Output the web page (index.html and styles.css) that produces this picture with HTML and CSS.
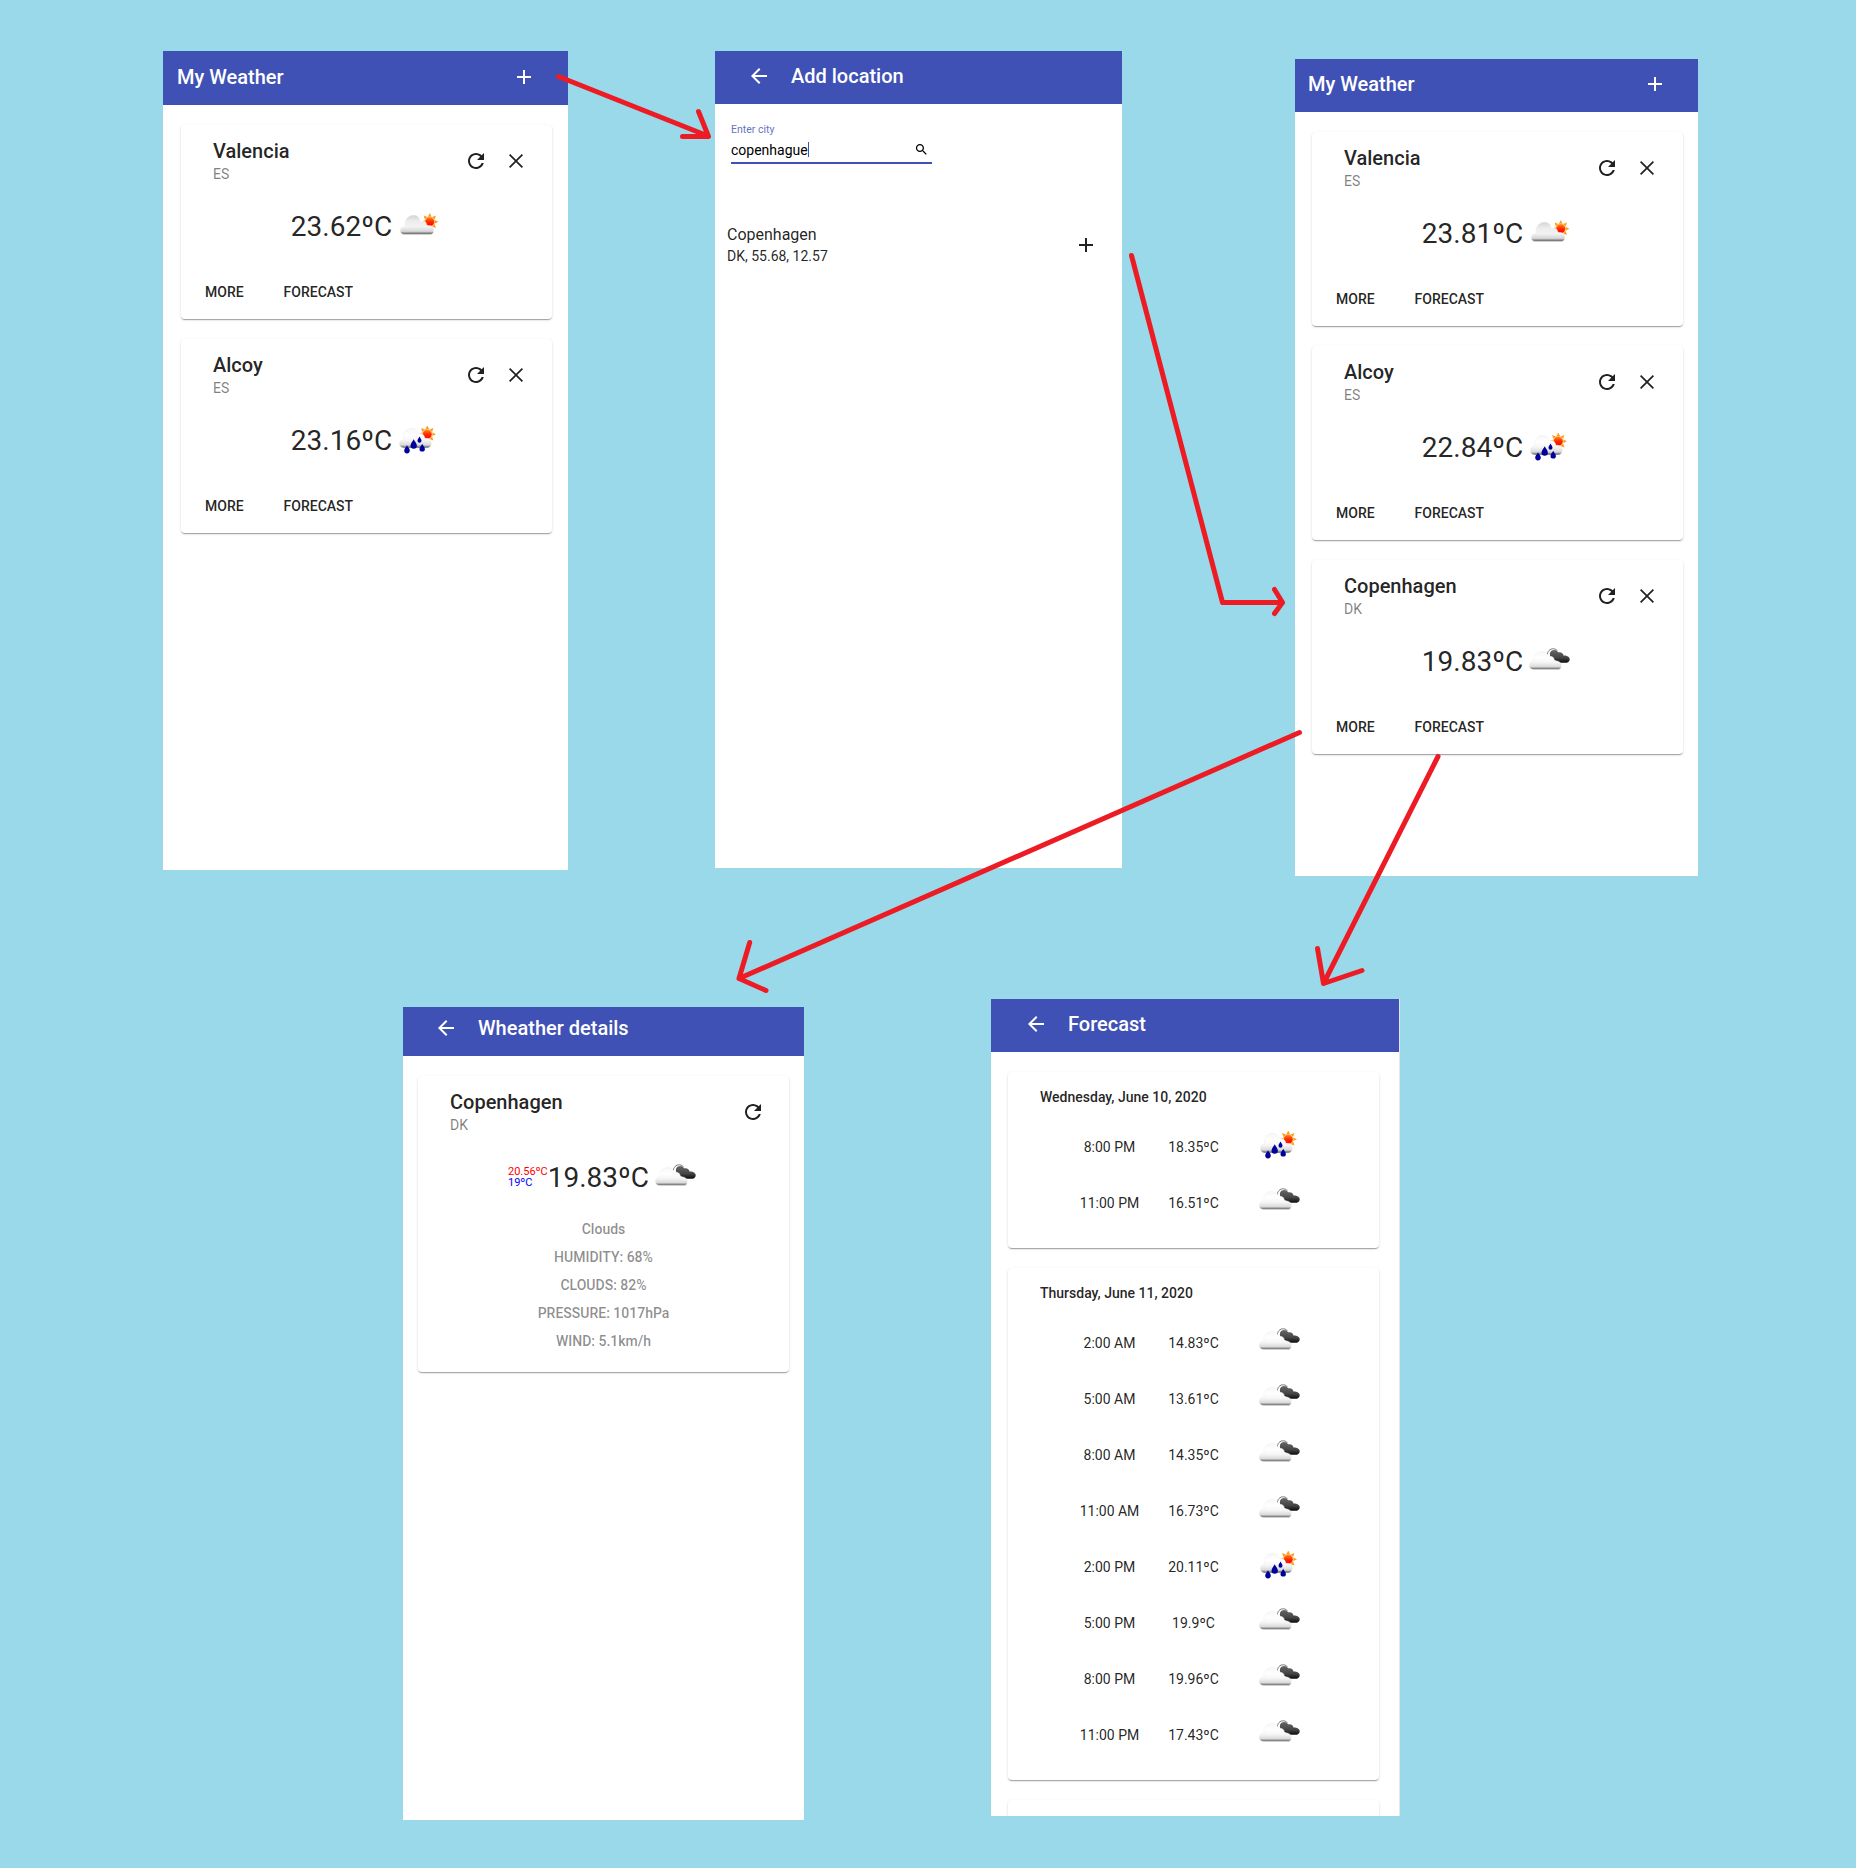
FILE: index.html
```html
<!DOCTYPE html>
<html lang="en">
<head>
<meta charset="utf-8">
<title>My Weather</title>
<link rel="stylesheet" href="styles.css">
</head>
<body>
<svg class="defs" width="0" height="0" aria-hidden="true">
  <defs>
    <linearGradient id="white-cloud" x1="0" y1="0" x2="0" y2="1">
      <stop offset="0" stop-color="#f6f6f6"/><stop offset=".35" stop-color="#fff"/><stop offset=".6" stop-color="#f6f6f6"/><stop offset=".85" stop-color="#dadada"/><stop offset=".93" stop-color="#8a8a8a"/><stop offset="1" stop-color="#777"/>
    </linearGradient>
    <linearGradient id="gray-cloud" x1="0" y1="0" x2="0" y2="1">
      <stop offset="0" stop-color="#d2d2d2"/><stop offset=".3" stop-color="#ececec"/><stop offset=".6" stop-color="#f3f3f3"/><stop offset=".84" stop-color="#d6d6d6"/><stop offset=".93" stop-color="#858585"/><stop offset="1" stop-color="#666"/>
    </linearGradient>
    <linearGradient id="dark-cloud" x1="0" y1="0" x2="0" y2="1">
      <stop offset="0" stop-color="#666"/><stop offset=".6" stop-color="#444"/><stop offset="1" stop-color="#0c0c0c"/>
    </linearGradient>
    <linearGradient id="sun-fill" x1="0" y1="0" x2="0" y2="1">
      <stop offset="0" stop-color="#ff8a1c"/><stop offset=".5" stop-color="#ff2a00"/><stop offset="1" stop-color="#f00"/>
    </linearGradient>
    <symbol id="add" viewBox="0 0 24 24"><path d="M19 13h-6v6h-2v-6H5v-2h6V5h2v6h6v2z"/></symbol>
    <symbol id="back" viewBox="0 0 24 24"><path d="M20 11H7.83l5.59-5.59L12 4l-8 8 8 8 1.41-1.41L7.83 13H20v-2z"/></symbol>
    <symbol id="refresh" viewBox="0 0 24 24"><path d="M17.65 6.35C16.2 4.9 14.21 4 12 4c-4.42 0-7.99 3.58-7.99 8s3.57 8 7.99 8c3.73 0 6.84-2.55 7.73-6h-2.08c-.82 2.33-3.04 4-5.65 4-3.31 0-6-2.69-6-6s2.69-6 6-6c1.66 0 3.14.69 4.22 1.78L13 11h7V4l-2.35 2.35z"/></symbol>
    <symbol id="close" viewBox="0 0 24 24"><path d="M19 6.2 17.8 5 12 10.8 6.2 5 5 6.2 10.8 12 5 17.8 6.2 19l5.8-5.8 5.8 5.8 1.2-1.2-5.8-5.8z"/></symbol>
    <symbol id="search" viewBox="0 0 24 24"><path d="M15.5 14h-.79l-.28-.27C15.41 12.59 16 11.11 16 9.5 16 5.91 13.09 3 9.5 3S3 5.91 3 9.5 5.91 16 9.5 16c1.61 0 3.09-.59 4.23-1.57l.27.28v.79l5 4.99L20.49 19l-4.99-5zm-6 0C7.01 14 5 11.99 5 9.5S7.01 5 9.5 5 14 7.01 14 9.5 11.99 14 9.5 14z"/></symbol>
    <symbol id="sun" viewBox="0 0 16 16">
      <g fill="#ff9c1a">
        <path id="ray" d="M8 0l1.700 3.400H6.300z"/>
        <use href="#ray" transform="rotate(45 8 8)"/><use href="#ray" transform="rotate(90 8 8)"/><use href="#ray" transform="rotate(135 8 8)"/><use href="#ray" transform="rotate(180 8 8)"/><use href="#ray" transform="rotate(270 8 8)"/><use href="#ray" transform="rotate(315 8 8)"/>
      </g>
      <circle cx="8" cy="8" r="4.300" fill="url(#sun-fill)" stroke="#ffae45" stroke-width=".5"/>
    </symbol>
    <symbol id="few-clouds" viewBox="0 0 50 50">
      <use href="#sun" x="29" y="13" width="17.500" height="17.500"/>
      <path fill="url(#gray-cloud)" stroke="#fff" stroke-width=".4" d="M12.500 34.500C6.500 34.500 6.800 26.500 12.500 26 12 19 17 14.800 21.500 15c4.500 0 6.500 3.200 7 6.200 4-1.200 6.500 1.300 6.300 4.600C37 25.200 41.800 25.400 42 30c0 3.500-2 4.500-4 4.500z"/>
    </symbol>
    <symbol id="rain" viewBox="0 0 50 50">
      <use href="#sun" x="26.500" y="11.500" width="17.500" height="17.500"/>
      <path fill="url(#white-cloud)" stroke="#e6e6e6" stroke-width=".3" d="M12.500 34C5.800 34 5.800 25.500 11.500 25.200 10.800 18 15 14 19.500 14.200c4 0 6 2.500 6.800 5.500 4-1.200 6.400 1.500 6.500 4.700 3.500-.8 6.500 1.200 6.500 4.800 0 3.200-2 4.800-4.300 4.800z"/>
      <path fill="#00009c" d="M21.700 25.200c.8 2.200 3.200 4 3.200 6.400a3.200 3.200 0 0 1-6.400 0c0-2.400 2.400-4.200 3.200-6.400zM15 31.300c.6 1.600 2.800 3.200 2.800 5.300a2.800 2.800 0 0 1-5.600 0c0-2.100 2.200-3.700 2.800-5.300zM30.200 29.700c.6 1.600 2.700 3.200 2.700 5.200a2.700 2.700 0 0 1-5.400 0c0-2 2.100-3.600 2.700-5.200zM27.500 22.600c.5 1.300 2 2.500 2 4.200a2 2 0 0 1-4 0c0-1.700 1.500-2.900 2-4.200z"/>
    </symbol>
    <symbol id="clouds" viewBox="0 0 50 50">
      <path fill="none" stroke="#777" stroke-width="1" d="M24 20.500c.5-4.200 3-7 6.500-6.700 2 .2 3.200 1 4 2.400"/>
      <path fill="url(#dark-cloud)" d="M27 18c.8-3.500 6-4.200 8-.7 3-.7 5.300.8 5.500 3.200 3.500-.2 6.300 1.500 6.200 3.900-.1 2.400-2.200 3.400-4.200 3.400H37c-2.500 0-3.500-1-4-2.300C29.500 25.500 26.200 22.500 27 18z"/>
      <path fill="url(#white-cloud)" stroke="#eee" stroke-width=".4" d="M10.500 34.500C4.800 34.500 4.800 26 11 25.600 10.200 20 14 16.200 18.500 16.400c4 0 6.300 2 7 5.100 3.500-1 6 1.300 6 4.500 3.500-.6 6.800 1 6.800 4.400 0 3.200-1.800 4.100-4 4.100z"/>
    </symbol>
  </defs>
</svg>

<main class="board">
  <section class="screen screen-home">
    <div class="page">
      <header class="bar"><h1>My Weather</h1><svg class="icon"><use href="#add"/></svg></header>
      <div class="content">
        <article class="card city">
          <header class="card-head"><div><h2>Valencia</h2><p>ES</p></div><svg class="icon"><use href="#refresh"/></svg><svg class="icon"><use href="#close"/></svg></header>
          <div class="temp"><span>23.62ºC</span><svg class="weather"><use href="#few-clouds"/></svg></div>
          <footer><button>MORE</button><button>FORECAST</button></footer>
        </article>
        <article class="card city">
          <header class="card-head"><div><h2>Alcoy</h2><p>ES</p></div><svg class="icon"><use href="#refresh"/></svg><svg class="icon"><use href="#close"/></svg></header>
          <div class="temp"><span>23.16ºC</span><svg class="weather"><use href="#rain"/></svg></div>
          <footer><button>MORE</button><button>FORECAST</button></footer>
        </article>
      </div>
    </div>
  </section>

  <section class="screen screen-add">
    <div class="page">
      <header class="bar bar-back"><svg class="icon"><use href="#back"/></svg><h1>Add location</h1></header>
      <div class="search">
        <label>Enter city</label>
        <div class="field"><span>copenhague</span><i class="caret"></i><svg><use href="#search"/></svg></div>
      </div>
      <div class="result"><div><h3>Copenhagen</h3><p>DK, 55.68, 12.57</p></div><svg class="icon"><use href="#add"/></svg></div>
    </div>
  </section>

  <section class="screen screen-updated">
    <div class="page">
      <header class="bar"><h1>My Weather</h1><svg class="icon"><use href="#add"/></svg></header>
      <div class="content">
        <article class="card city">
          <header class="card-head"><div><h2>Valencia</h2><p>ES</p></div><svg class="icon"><use href="#refresh"/></svg><svg class="icon"><use href="#close"/></svg></header>
          <div class="temp"><span>23.81ºC</span><svg class="weather"><use href="#few-clouds"/></svg></div>
          <footer><button>MORE</button><button>FORECAST</button></footer>
        </article>
        <article class="card city">
          <header class="card-head"><div><h2>Alcoy</h2><p>ES</p></div><svg class="icon"><use href="#refresh"/></svg><svg class="icon"><use href="#close"/></svg></header>
          <div class="temp"><span>22.84ºC</span><svg class="weather"><use href="#rain"/></svg></div>
          <footer><button>MORE</button><button>FORECAST</button></footer>
        </article>
        <article class="card city">
          <header class="card-head"><div><h2>Copenhagen</h2><p>DK</p></div><svg class="icon"><use href="#refresh"/></svg><svg class="icon"><use href="#close"/></svg></header>
          <div class="temp"><span>19.83ºC</span><svg class="weather"><use href="#clouds"/></svg></div>
          <footer><button>MORE</button><button>FORECAST</button></footer>
        </article>
      </div>
    </div>
  </section>

  <section class="screen screen-details">
    <div class="page">
      <header class="bar bar-back"><svg class="icon"><use href="#back"/></svg><h1>Wheather details</h1></header>
      <div class="content">
        <article class="card details">
          <header class="card-head"><div><h2>Copenhagen</h2><p>DK</p></div><svg class="icon"><use href="#refresh"/></svg></header>
          <div class="temp"><div class="range"><b class="max">20.56ºC</b><b class="min">19ºC</b></div><span>19.83ºC</span><svg class="weather"><use href="#clouds"/></svg></div>
          <ul class="facts"><li>Clouds</li><li>HUMIDITY: 68%</li><li>CLOUDS: 82%</li><li>PRESSURE: 1017hPa</li><li>WIND: 5.1km/h</li></ul>
        </article>
      </div>
    </div>
  </section>

  <section class="screen screen-forecast">
    <div class="page">
      <header class="bar bar-back"><svg class="icon"><use href="#back"/></svg><h1>Forecast</h1></header>
      <div class="content">
        <article class="card day">
          <h2>Wednesday, June 10, 2020</h2>
          <div class="hours">
            <span>8:00 PM</span><span>18.35ºC</span><svg class="weather"><use href="#rain"/></svg>
            <span>11:00 PM</span><span>16.51ºC</span><svg class="weather"><use href="#clouds"/></svg>
          </div>
        </article>
        <article class="card day">
          <h2>Thursday, June 11, 2020</h2>
          <div class="hours">
            <span>2:00 AM</span><span>14.83ºC</span><svg class="weather"><use href="#clouds"/></svg>
            <span>5:00 AM</span><span>13.61ºC</span><svg class="weather"><use href="#clouds"/></svg>
            <span>8:00 AM</span><span>14.35ºC</span><svg class="weather"><use href="#clouds"/></svg>
            <span>11:00 AM</span><span>16.73ºC</span><svg class="weather"><use href="#clouds"/></svg>
            <span>2:00 PM</span><span>20.11ºC</span><svg class="weather"><use href="#rain"/></svg>
            <span>5:00 PM</span><span>19.9ºC</span><svg class="weather"><use href="#clouds"/></svg>
            <span>8:00 PM</span><span>19.96ºC</span><svg class="weather"><use href="#clouds"/></svg>
            <span>11:00 PM</span><span>17.43ºC</span><svg class="weather"><use href="#clouds"/></svg>
          </div>
        </article>
        <article class="card day"></article>
      </div>
    </div>
  </section>

  <svg class="arrows" viewBox="0 0 1856 1868">
    <path d="M558.500 76.500L708 136M698.500 111.500L708.500 136.500L682.500 136.500"/>
    <path d="M1131.500 255.500L1222.500 602.500L1282.500 602.500M1274.500 589.500L1282.500 602.500L1274.500 613.500"/>
    <path d="M1299.500 732.500L739 978.500M749.700 942.500L739 978.500L766 990.500"/>
    <path d="M1438 756.500L1323.500 983.500M1317.500 948.500L1323.500 983.500L1362 970.500"/>
  </svg>
</main>
</body>
</html>
```
FILE: styles.css
```css
* { box-sizing: border-box; margin: 0; padding: 0; }
body { background: #99d9ea; font-family: Roboto, "Liberation Sans", sans-serif; color: rgba(0, 0, 0, .87); }
.defs { position: absolute; }
.board { position: relative; width: 1856px; height: 1868px; overflow: hidden; }
.arrows { position: absolute; inset: 0; width: 1856px; height: 1868px; fill: none; stroke: #ed1c24; stroke-width: 5; stroke-linecap: round; stroke-linejoin: round; }

/* Screens are placed freely on the flow board; each one is a crop of a 411px page. */
.screen { position: absolute; overflow: hidden; background: #fff; display: flex; align-items: flex-start; }
.page { flex: none; width: 411px; }
.screen-home { left: 163px; top: 51px; width: 405px; height: 819px; }
.screen-home .page { margin: -2px 0 0 -2px; }
.screen-add { left: 715px; top: 51px; width: 407px; height: 817px; }
.screen-add .page { margin: -3px 0 0 -4px; }
.screen-updated { left: 1295px; top: 59px; width: 403px; height: 817px; }
.screen-updated .page { margin: -3px 0 0 -3px; }
.screen-details { left: 403px; top: 1007px; width: 401px; height: 813px; }
.screen-details .page { margin: -7px 0 0 -5px; }
.screen-forecast { left: 991px; top: 999px; width: 409px; height: 817px; border-right: 1px solid #e4e8ea; }
.screen-forecast .page { margin: -3px 0 0 -3px; }

.icon { width: 24px; height: 24px; fill: currentColor; flex: none; }
.weather { width: 50px; height: 50px; flex: none; }

.bar { height: 56px; background: #3f51b5; color: #fff; display: flex; align-items: center; justify-content: space-between; padding: 0 36px 0 16px; }
.bar-back { justify-content: flex-start; gap: 20px; padding-left: 36px; }
.bar h1 { font-size: 20px; font-weight: 500; line-height: 32px; }

.content { display: flex; flex-direction: column; gap: 20px; padding: 20px; }
.card { width: 371px; padding-top: .1px; border-radius: 4px; background: #fff; box-shadow: 0 2px 1px -1px rgba(0, 0, 0, .2), 0 1px 1px 0 rgba(0, 0, 0, .14), 0 1px 3px 0 rgba(0, 0, 0, .12); }
.city { height: 194px; }
.details { height: 296px; }
.card-head { display: flex; align-items: center; gap: 16px; height: 40px; padding: 0 24px 0 32px; margin-top: 16px; }
.card-head div { flex: 1; height: 40px; }
.card-head h2 { font-size: 20px; font-weight: 500; line-height: 20px; }
.card-head p { font-size: 14px; line-height: 20px; margin-top: 3px; color: rgba(0, 0, 0, .5); }
.temp { display: flex; justify-content: center; margin-top: 19px; height: 50px; font-size: 28px; line-height: 54px; }
.range { display: flex; flex-direction: column; justify-content: center; padding-top: 2px; font-size: 11px; line-height: 11px; }
.range b { font-weight: 400; }
.max { color: #f00; }
.min { color: #00f; }
.city footer { display: flex; gap: 8px; padding: 0 8px; margin-top: 24px; }
button { border: 0; background: none; font: 500 14px/37px Roboto, sans-serif; color: inherit; padding: 0 16px; }

.facts { list-style: none; margin-top: 14px; text-align: center; font-size: 14px; font-weight: 500; line-height: 28px; color: rgba(0, 0, 0, .45); }

.day h2 { font-size: 14px; font-weight: 500; line-height: 20px; margin: 15px 32px 12px; }
.hours { display: grid; grid-template-columns: repeat(3, 84px); grid-auto-rows: 56px; justify-content: center; justify-items: center; font-size: 14px; line-height: 57px; padding-bottom: 17px; box-sizing: content-box; }
.day:empty { height: 176px; }

.search { width: 201px; margin: 19px 0 0 20px; }
.search label { display: block; font-size: 10.5px; line-height: 14px; color: #3f51b5; opacity: .8; }
.field { display: flex; align-items: center; height: 27px; border-bottom: 2px solid #3f51b5; font-size: 14px; color: #000; }
.field svg { width: 15px; height: 15px; margin: 0 3px 0 auto; }
.caret { width: 1px; height: 15px; background: #3f51b5; }
.result { display: flex; align-items: center; justify-content: space-between; margin: 59px 24px 0 16px; height: 44px; }
.result h3 { font-size: 16px; font-weight: 400; line-height: 22px; }
.result p { font-size: 14px; line-height: 21px; }
```
